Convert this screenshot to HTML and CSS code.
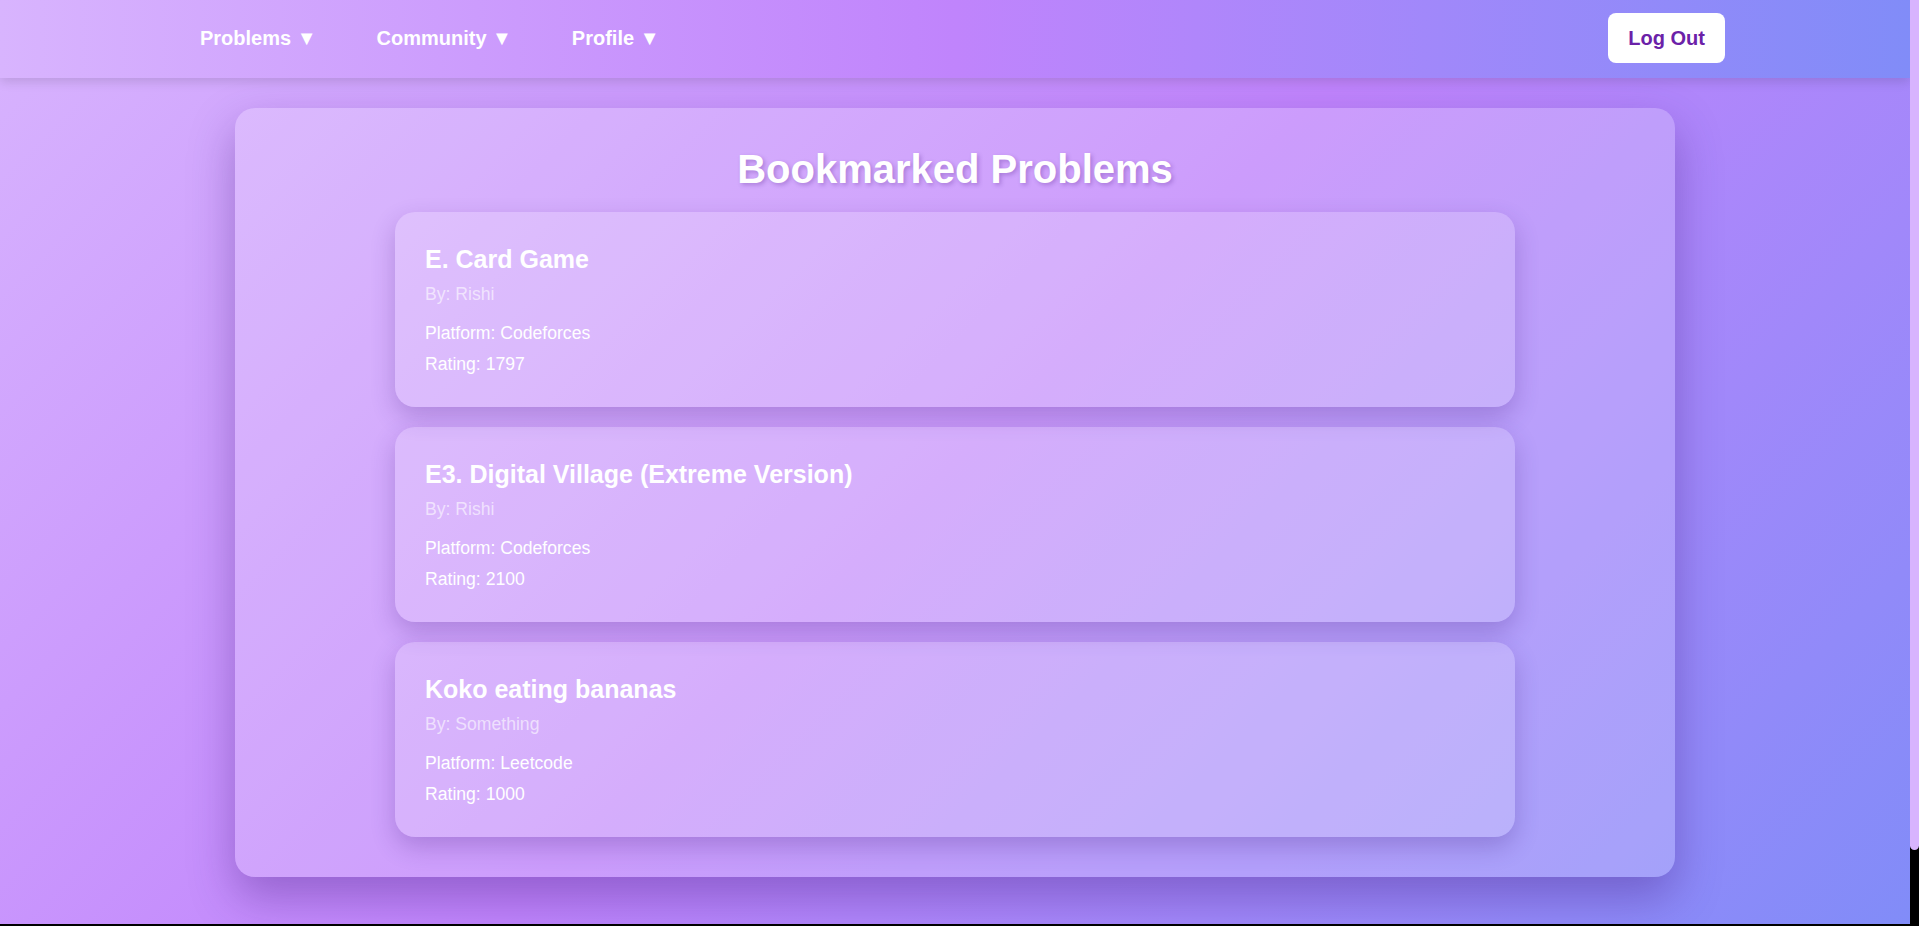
FILE: index.html
```html
<!DOCTYPE html>
<html lang="en">
<head>
<meta charset="utf-8">
<title>Bookmarked Problems</title>
<link rel="stylesheet" href="styles.css">
</head>
<body>
  <nav class="navbar">
    <ul class="nav-links">
      <li class="nav-item">Problems ▼</li>
      <li class="nav-item">Community ▼</li>
      <li class="nav-item">Profile ▼</li>
    </ul>
    <button class="logout-btn">Log Out</button>
  </nav>

  <main class="bookmarks">
    <h2 class="page-title">Bookmarked Problems</h2>
    <div class="card-list">
      <div class="problem-card">
        <h3 class="problem-title">E. Card Game</h3>
        <p class="problem-author">By: Rishi</p>
        <p class="problem-meta platform">Platform: Codeforces</p>
        <p class="problem-meta">Rating: 1797</p>
      </div>
      <div class="problem-card">
        <h3 class="problem-title">E3. Digital Village (Extreme Version)</h3>
        <p class="problem-author">By: Rishi</p>
        <p class="problem-meta platform">Platform: Codeforces</p>
        <p class="problem-meta">Rating: 2100</p>
      </div>
      <div class="problem-card">
        <h3 class="problem-title">Koko eating bananas</h3>
        <p class="problem-author">By: Something</p>
        <p class="problem-meta platform">Platform: Leetcode</p>
        <p class="problem-meta">Rating: 1000</p>
      </div>
    </div>
  </main>

  <div class="scroll-thumb" aria-hidden="true"></div>
</body>
</html>
```

FILE: styles.css
```css
html {
  background: #000;
  overflow: hidden;
}

body {
  margin: 0 9px 0 0;
  min-height: 924px;
  box-sizing: border-box;
  font-family: "Liberation Sans", Arial, Helvetica, sans-serif;
  color: #fff;
  background: linear-gradient(135deg, #d8b4fe 0%, #c084fc 50%, #818cf8 100%);
}

.scroll-thumb {
  position: fixed;
  top: 0;
  right: 0;
  width: 9px;
  height: 850px;
  background: #d8b4fe;
  border-radius: 0 0 5px 5px;
}

.navbar {
  height: 78px;
  box-sizing: border-box;
  display: flex;
  align-items: center;
  justify-content: space-between;
  padding: 0 185px 2px 200px;
  background: linear-gradient(90deg, #d8b4fe 0%, #c084fc 50%, #818cf8 100%);
  box-shadow: 0 4px 10px rgba(0, 0, 0, 0.12);
  position: relative;
  z-index: 2;
}

.nav-links {
  display: flex;
  gap: 60px;
  list-style: none;
  margin: 0;
  padding: 0;
}

.nav-item {
  font-size: 20px;
  font-weight: 700;
  color: #fff;
  line-height: 23px;
  cursor: pointer;
}

.logout-btn {
  font-family: inherit;
  font-size: 20px;
  font-weight: 700;
  line-height: 24px;
  color: #6b21a8;
  background: #fff;
  border: none;
  border-radius: 8px;
  padding: 13px 20px;
  cursor: pointer;
}

.bookmarks {
  max-width: 1440px;
  margin: 30px auto 0;
  box-sizing: border-box;
  padding: 38px 40px 40px;
  border-radius: 20px;
  background: rgba(255, 255, 255, 0.2);
  box-shadow: 0 20px 45px rgba(60, 20, 120, 0.35);
}

.page-title {
  margin: 0 0 20px;
  text-align: center;
  font-size: 40px;
  line-height: 46px;
  font-weight: 700;
  color: #fff;
  text-shadow: 2px 2px 4px rgba(80, 30, 140, 0.3);
}

.card-list {
  max-width: 1120px;
  margin: 0 auto;
  display: flex;
  flex-direction: column;
  gap: 20px;
}

.problem-card {
  padding: 32px 30px;
  border-radius: 20px;
  background: rgba(255, 255, 255, 0.18);
  box-shadow: 0 10px 25px rgba(60, 20, 120, 0.24);
}

.problem-title {
  margin: 0 0 9px;
  font-size: 25px;
  line-height: 30px;
  font-weight: 700;
  color: #fff;
}

.problem-author {
  margin: 0 0 17px;
  font-size: 17.6px;
  line-height: 22px;
  color: rgba(255, 255, 255, 0.6);
}

.problem-meta {
  margin: 0;
  font-size: 17.6px;
  line-height: 22px;
  color: #fff;
}

.problem-meta.platform {
  margin-bottom: 9px;
}
```
